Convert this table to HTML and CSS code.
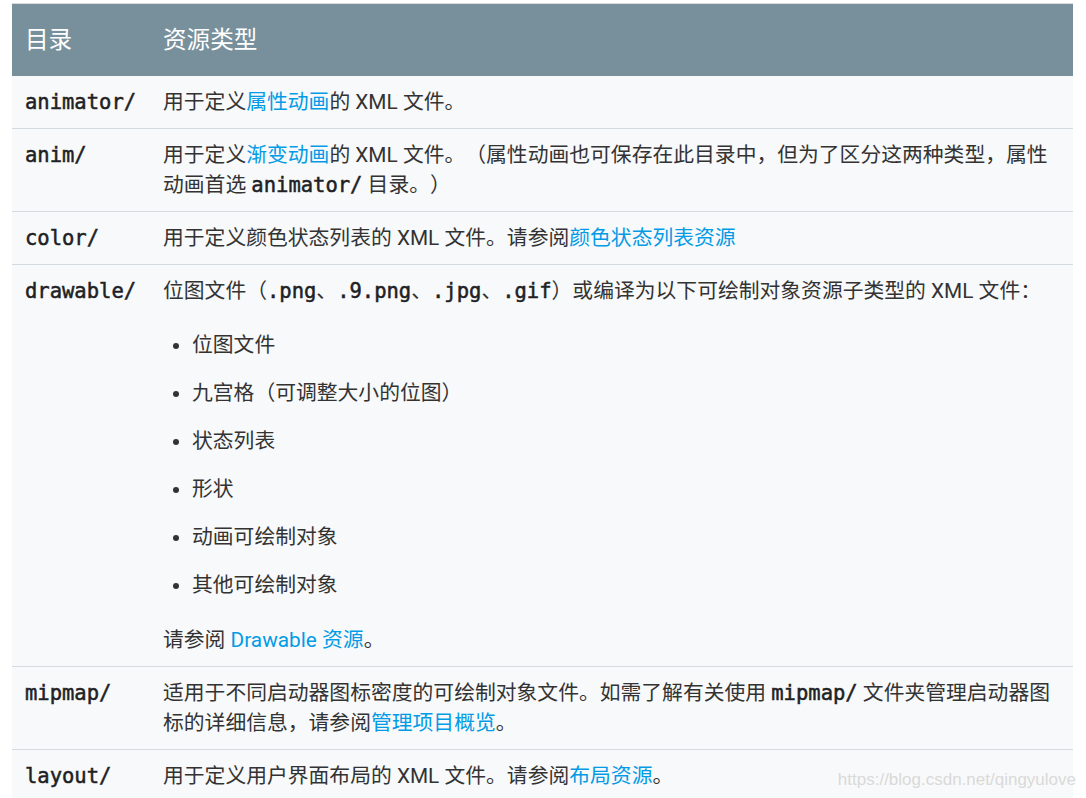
FILE: index.html
```html
<!DOCTYPE html>
<html lang="zh-CN">
<head>
  <meta charset="UTF-8" />
  <title>资源类型</title>
  <link rel="stylesheet" href="styles.css">
</head>
<body>

<table class="res-table">
  <thead>
    <tr>
      <th class="col-dir">目录</th>
      <th>资源类型</th>
    </tr>
  </thead>
  <tbody>
    <tr>
      <td><code>animator/</code></td>
      <td>用于定义<a href="#">属性动画</a>的 XML 文件。</td>
    </tr>
    <tr>
      <td><code>anim/</code></td>
      <td>用于定义<a href="#">渐变动画</a>的 XML 文件。（属性动画也可保存在此目录中，但为了区分这两种类型，属性动画首选 <code>animator/</code> 目录。）</td>
    </tr>
    <tr>
      <td><code>color/</code></td>
      <td>用于定义颜色状态列表的 XML 文件。请参阅<a href="#">颜色状态列表资源</a></td>
    </tr>
    <tr>
      <td><code>drawable/</code></td>
      <td>
        位图文件（<code>.png</code>、<code>.9.png</code>、<code>.jpg</code>、<code>.gif</code>）或编译为以下可绘制对象资源子类型的 XML 文件：
        <ul class="types">
          <li>位图文件</li>
          <li>九宫格（可调整大小的位图）</li>
          <li>状态列表</li>
          <li>形状</li>
          <li>动画可绘制对象</li>
          <li>其他可绘制对象</li>
        </ul>
        <p>请参阅 <a href="#">Drawable 资源</a>。</p>
      </td>
    </tr>
    <tr>
      <td><code>mipmap/</code></td>
      <td>适用于不同启动器图标密度的可绘制对象文件。如需了解有关使用 <code>mipmap/</code> 文件夹管理启动器图标的详细信息，请参阅<a href="#">管理项目概览</a>。</td>
    </tr>
    <tr>
      <td><code>layout/</code></td>
      <td>用于定义用户界面布局的 XML 文件。请参阅<a href="#">布局资源</a>。</td>
    </tr>
  </tbody>
</table>

<div class="watermark">https://blog.csdn.net/qingyulove</div>

</body>
</html>
```

FILE: styles.css
```css
* {
  margin: 0;
  padding: 0;
  box-sizing: border-box;
}

html, body {
  background: #fff;
  font-family: Roboto, "Noto Sans CJK SC", sans-serif;
  color: #333;
  overflow: hidden;
}

body {
  padding: 3px 13px 0 12px;
  position: relative;
  height: 798px;
}

/* Table */
.res-table {
  width: 100%;
  border-collapse: collapse;
  border-top: 1px solid #dadce0;
  font-size: 20.8px;
  line-height: 30px;
  text-spacing-trim: space-all;
}

.res-table th {
  background: #78909c;
  color: #fff;
  font-size: 23.6px;
  font-weight: 400;
  text-align: left;
  height: 72px;
  padding: 0 13px;
  vertical-align: middle;
}

.res-table .col-dir {
  width: 138px;
}

.res-table td {
  background: #f8f9fa;
  border-bottom: 1px solid #d3dbe0;
  padding: 11px 13px;
  vertical-align: top;
}

code {
  font-family: "DejaVu Sans Mono", monospace;
  font-size: 20.5px;
  line-height: 1;
  color: #202124;
  -webkit-text-stroke: 0.5px #202124;
}

a {
  color: #039be5;
  text-decoration: none;
}

/* drawable list */
.types {
  margin: 24px 0 25px;
  padding-left: 29px;
}

.types li {
  margin-top: 18px;
}

.types li:first-child {
  margin-top: 0;
}

/* Watermark */
.watermark {
  position: absolute;
  right: 10px;
  bottom: 8px;
  font-family: "Liberation Sans", sans-serif;
  font-size: 17px;
  color: #d9d9d9;
}
```
